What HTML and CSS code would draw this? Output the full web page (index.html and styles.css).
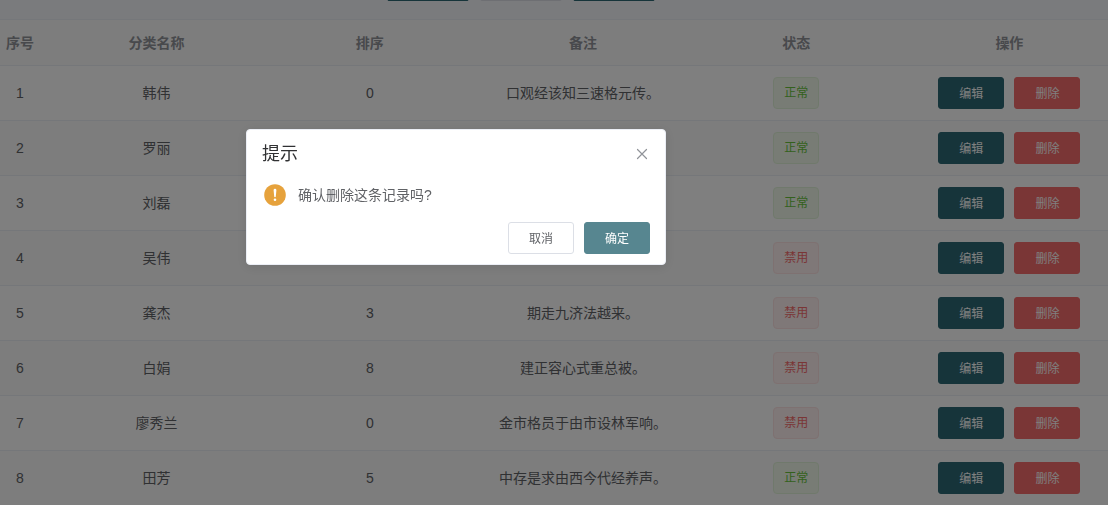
FILE: index.html
```html
<!DOCTYPE html>
<html lang="zh-CN">
<head>
<meta charset="utf-8">
<title>提示</title>
<link rel="stylesheet" href="styles.css">
</head>
<body>
<main class="page">
  <div class="toolbar">
    <button class="tool tool-primary" type="button" aria-label="查询"></button>
    <button class="tool" type="button" aria-label="重置"></button>
    <button class="tool tool-primary" type="button" aria-label="新增"></button>
  </div>
  <table class="table">
    <thead>
      <tr><th class="col-index">序号</th><th>分类名称</th><th>排序</th><th>备注</th><th>状态</th><th>操作</th></tr>
    </thead>
    <tbody>
      <tr><td>1</td><td>韩伟</td><td>0</td><td>口观经该知三速格元传。</td><td><span class="tag tag-success">正常</span></td><td><div class="actions"><button class="btn btn-primary" type="button">编辑</button><button class="btn btn-danger" type="button">删除</button></div></td></tr>
      <tr><td>2</td><td>罗丽</td><td></td><td></td><td><span class="tag tag-success">正常</span></td><td><div class="actions"><button class="btn btn-primary" type="button">编辑</button><button class="btn btn-danger" type="button">删除</button></div></td></tr>
      <tr><td>3</td><td>刘磊</td><td></td><td></td><td><span class="tag tag-success">正常</span></td><td><div class="actions"><button class="btn btn-primary" type="button">编辑</button><button class="btn btn-danger" type="button">删除</button></div></td></tr>
      <tr><td>4</td><td>吴伟</td><td></td><td></td><td><span class="tag tag-danger">禁用</span></td><td><div class="actions"><button class="btn btn-primary" type="button">编辑</button><button class="btn btn-danger" type="button">删除</button></div></td></tr>
      <tr><td>5</td><td>龚杰</td><td>3</td><td>期走九济法越来。</td><td><span class="tag tag-danger">禁用</span></td><td><div class="actions"><button class="btn btn-primary" type="button">编辑</button><button class="btn btn-danger" type="button">删除</button></div></td></tr>
      <tr><td>6</td><td>白娟</td><td>8</td><td>建正容心式重总被。</td><td><span class="tag tag-danger">禁用</span></td><td><div class="actions"><button class="btn btn-primary" type="button">编辑</button><button class="btn btn-danger" type="button">删除</button></div></td></tr>
      <tr><td>7</td><td>廖秀兰</td><td>0</td><td>金市格员于由市设林军响。</td><td><span class="tag tag-danger">禁用</span></td><td><div class="actions"><button class="btn btn-primary" type="button">编辑</button><button class="btn btn-danger" type="button">删除</button></div></td></tr>
      <tr><td>8</td><td>田芳</td><td>5</td><td>中存是求由西今代经养声。</td><td><span class="tag tag-success">正常</span></td><td><div class="actions"><button class="btn btn-primary" type="button">编辑</button><button class="btn btn-danger" type="button">删除</button></div></td></tr>
    </tbody>
  </table>
</main>
<div class="overlay">
  <section class="dialog" role="dialog" aria-modal="true" aria-labelledby="dialog-title">
    <header class="dialog-header">
      <h1 class="dialog-title" id="dialog-title">提示</h1>
      <button class="dialog-close" type="button" aria-label="关闭">
        <svg width="16" height="16" viewBox="0 0 16 16" fill="none" stroke="#909399" stroke-width="1.2" stroke-linecap="round"><path d="M3.5 3.5l9 9M12.500 3.5l-9 9"/></svg>
      </button>
    </header>
    <div class="dialog-content">
      <svg class="dialog-icon" width="26" height="24" viewBox="0 0 26 24"><circle cx="13" cy="12" r="10.8" fill="#e6a23c"/><path d="M11.6 7.2a1.4 1.4 0 0 1 2.8 0l-.6 6.3a.8.8 0 0 1-1.6 0z" fill="#fff"/><circle cx="13" cy="16.8" r="1.3" fill="#fff"/></svg>
      <p class="dialog-message">确认删除这条记录吗?</p>
    </div>
    <footer class="dialog-footer">
      <button class="btn btn-plain" type="button">取消</button>
      <button class="btn btn-confirm" type="button">确定</button>
    </footer>
  </section>
</div>
</body>
</html>
```
FILE: styles.css
```css
* {
  box-sizing: border-box;
}

body {
  margin: 0;
  overflow: hidden;
  color: #606266;
  font-family: "Liberation Sans", "Noto Sans CJK SC", sans-serif;
  font-size: 14px;
}

button {
  font-family: inherit;
  cursor: pointer;
}

.page {
  height: 100vh;
  overflow: hidden;
  background: #fff;
}

.toolbar {
  display: flex;
  justify-content: center;
  gap: 11px;
  margin-top: -31px;
  padding: 0 67px 18px 0;
  background: #f5f7fa;
  border-bottom: 1px solid #ebeef5;
}

.tool {
  width: 82px;
  height: 32px;
  border: 1px solid #dcdfe6;
  border-radius: 2px;
  background: #fff;
}

.tool-primary {
  border-color: #2d6874;
  background: #2d6874;
}

.table {
  width: calc(100% + 18px);
  margin-left: -10px;
  table-layout: fixed;
  border-collapse: separate;
  border-spacing: 0;
  text-align: center;
}

.table th,
.table td {
  padding: 11px 10px;
  border-bottom: 1px solid #ebeef5;
  line-height: 22px;
  white-space: nowrap;
}

.table td {
  height: 55px;
}

.table th {
  height: 46px;
  background: #fafafa;
  color: #909399;
  font-weight: 700;
}

.table .col-index {
  width: 60px;
  padding: 11px 0;
}

.table tbody tr:nth-child(even) td {
  background: #fafafa;
}

.tag {
  display: block;
  width: fit-content;
  height: 32px;
  margin: 0 auto;
  padding: 0 10px;
  border: 1px solid;
  border-radius: 4px;
  font-size: 12px;
  line-height: 30px;
}

.tag-success {
  border-color: #e1f3d8;
  background: #f0f9eb;
  color: #67c23a;
}

.tag-danger {
  border-color: #fde2e2;
  background: #fef0f0;
  color: #f56c6c;
}

.actions,
.dialog-footer {
  display: flex;
  gap: 10px;
}

.actions {
  justify-content: center;
}

.btn {
  height: 32px;
  padding: 2px 20px 0;
  border: 1px solid;
  border-radius: 3px;
  color: #fff;
  font-size: 12px;
  line-height: 28px;
}

.btn-primary {
  border-color: #2d6874;
  background: #2d6874;
}

.btn-danger {
  border-color: #f56c6c;
  background: #f56c6c;
}

.btn-plain {
  border-color: #dcdfe6;
  background: #fff;
  color: #606266;
}

.btn-confirm {
  border-color: #578690;
  background: #578690;
}

.overlay {
  position: fixed;
  inset: 0;
  display: flex;
  justify-content: center;
  align-items: flex-start;
  padding: 129px 196px 0 0;
  background: rgba(0, 0, 0, 0.5);
}

.dialog {
  width: 420px;
  padding-bottom: 10px;
  border: 1px solid #ebeef5;
  border-radius: 4px;
  background: #fff;
  box-shadow: 0 2px 12px rgba(0, 0, 0, 0.1);
}

.dialog-header {
  display: flex;
  justify-content: space-between;
  align-items: center;
  padding: 15px 15px 10px;
}

.dialog-title {
  margin: 0;
  color: #303133;
  font-size: 18px;
  font-weight: 400;
  line-height: 18px;
}

.dialog-close {
  display: flex;
  padding: 0;
  border: 0;
  background: none;
}

.dialog-content {
  display: flex;
  align-items: center;
  gap: 10px;
  padding: 10px 15px;
}

.dialog-message {
  margin: 0;
  line-height: 24px;
}

.dialog-footer {
  justify-content: flex-end;
  padding: 5px 15px 0;
}
```
